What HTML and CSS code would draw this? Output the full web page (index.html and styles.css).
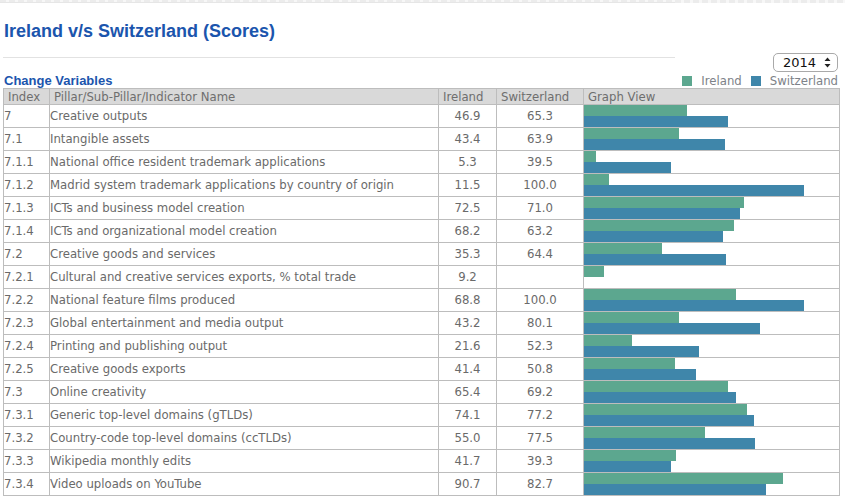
FILE: index.html
```html
<!DOCTYPE html>
<html>
<head>
<meta charset="utf-8">
<link rel="stylesheet" href="styles.css">
</head>
<body>
<div class="topline"><div class="topline-left"></div></div>
<h1 class="title">Ireland v/s Switzerland (Scores)</h1>
<div class="rule-row">
  <div class="rule"></div>
  <div class="select"><span>2014</span>
    <svg class="updown" width="7" height="11" viewBox="0 0 7 11"><path d="M3.5 0.5 L6.5 4 L0.5 4 Z M3.5 10.5 L6.5 7 L0.5 7 Z" fill="#222"/></svg>
  </div>
</div>
<div class="controls">
  <a class="change">Change Variables</a>
  <div class="legend">
    <span class="sw green"></span><span class="lg-label">Ireland</span>
    <span class="sw blue"></span><span class="lg-label">Switzerland</span>
  </div>
</div>
<table class="grid">
  <colgroup>
    <col class="c-idx"><col class="c-name"><col class="c-ie"><col class="c-ch"><col class="c-graph">
  </colgroup>
  <thead>
    <tr><th>Index</th><th>Pillar/Sub-Pillar/Indicator Name</th><th>Ireland</th><th>Switzerland</th><th>Graph View</th></tr>
  </thead>
  <tbody>
    <tr><td class="idx">7</td><td class="name">Creative outputs</td><td class="num">46.9</td><td class="num">65.3</td><td class="graph"><div class="bar green" style="width:103px"></div><div class="bar blue" style="width:144px"></div></td></tr>
    <tr><td class="idx">7.1</td><td class="name">Intangible assets</td><td class="num">43.4</td><td class="num">63.9</td><td class="graph"><div class="bar green" style="width:95px"></div><div class="bar blue" style="width:141px"></div></td></tr>
    <tr><td class="idx">7.1.1</td><td class="name">National office resident trademark applications</td><td class="num">5.3</td><td class="num">39.5</td><td class="graph"><div class="bar green" style="width:12px"></div><div class="bar blue" style="width:87px"></div></td></tr>
    <tr><td class="idx">7.1.2</td><td class="name">Madrid system trademark applications by country of origin</td><td class="num">11.5</td><td class="num">100.0</td><td class="graph"><div class="bar green" style="width:25px"></div><div class="bar blue" style="width:220px"></div></td></tr>
    <tr><td class="idx">7.1.3</td><td class="name">ICTs and business model creation</td><td class="num">72.5</td><td class="num">71.0</td><td class="graph"><div class="bar green" style="width:160px"></div><div class="bar blue" style="width:156px"></div></td></tr>
    <tr><td class="idx">7.1.4</td><td class="name">ICTs and organizational model creation</td><td class="num">68.2</td><td class="num">63.2</td><td class="graph"><div class="bar green" style="width:150px"></div><div class="bar blue" style="width:139px"></div></td></tr>
    <tr><td class="idx">7.2</td><td class="name">Creative goods and services</td><td class="num">35.3</td><td class="num">64.4</td><td class="graph"><div class="bar green" style="width:78px"></div><div class="bar blue" style="width:142px"></div></td></tr>
    <tr><td class="idx">7.2.1</td><td class="name">Cultural and creative services exports, % total trade</td><td class="num">9.2</td><td class="num"></td><td class="graph"><div class="bar green" style="width:20px"></div></td></tr>
    <tr><td class="idx">7.2.2</td><td class="name">National feature films produced</td><td class="num">68.8</td><td class="num">100.0</td><td class="graph"><div class="bar green" style="width:152px"></div><div class="bar blue" style="width:220px"></div></td></tr>
    <tr><td class="idx">7.2.3</td><td class="name">Global entertainment and media output</td><td class="num">43.2</td><td class="num">80.1</td><td class="graph"><div class="bar green" style="width:95px"></div><div class="bar blue" style="width:176px"></div></td></tr>
    <tr><td class="idx">7.2.4</td><td class="name">Printing and publishing output</td><td class="num">21.6</td><td class="num">52.3</td><td class="graph"><div class="bar green" style="width:48px"></div><div class="bar blue" style="width:115px"></div></td></tr>
    <tr><td class="idx">7.2.5</td><td class="name">Creative goods exports</td><td class="num">41.4</td><td class="num">50.8</td><td class="graph"><div class="bar green" style="width:91px"></div><div class="bar blue" style="width:112px"></div></td></tr>
    <tr><td class="idx">7.3</td><td class="name">Online creativity</td><td class="num">65.4</td><td class="num">69.2</td><td class="graph"><div class="bar green" style="width:144px"></div><div class="bar blue" style="width:152px"></div></td></tr>
    <tr><td class="idx">7.3.1</td><td class="name">Generic top-level domains (gTLDs)</td><td class="num">74.1</td><td class="num">77.2</td><td class="graph"><div class="bar green" style="width:163px"></div><div class="bar blue" style="width:170px"></div></td></tr>
    <tr><td class="idx">7.3.2</td><td class="name">Country-code top-level domains (ccTLDs)</td><td class="num">55.0</td><td class="num">77.5</td><td class="graph"><div class="bar green" style="width:121px"></div><div class="bar blue" style="width:171px"></div></td></tr>
    <tr><td class="idx">7.3.3</td><td class="name">Wikipedia monthly edits</td><td class="num">41.7</td><td class="num">39.3</td><td class="graph"><div class="bar green" style="width:92px"></div><div class="bar blue" style="width:87px"></div></td></tr>
    <tr><td class="idx">7.3.4</td><td class="name">Video uploads on YouTube</td><td class="num">90.7</td><td class="num">82.7</td><td class="graph"><div class="bar green" style="width:199px"></div><div class="bar blue" style="width:182px"></div></td></tr>
  </tbody>
</table>
</body>
</html>
```

FILE: styles.css
```css
html, body {
  margin: 0;
  padding: 0;
  background: #fff;
}
body {
  width: 845px;
  font-family: "DejaVu Sans Condensed", "DejaVu Sans", sans-serif;
  color: #666;
}
.topline {
  height: 3px;
  background: repeating-linear-gradient(90deg, #ececec 0 6px, #f7f7f7 6px 9px);
}
.topline-left {
  width: 675px;
  height: 3px;
  border-bottom: 1px solid #e6e6e6;
  box-sizing: border-box;
}
.title {
  margin: 0;
  padding: 17px 0 0 4px;
  height: 32px;
  box-sizing: content-box;
  font-family: "Liberation Sans", Arial, sans-serif;
  font-weight: bold;
  font-size: 18px;
  line-height: 22px;
  color: #1b55ad;
}
.rule-row {
  display: flex;
  justify-content: space-between;
  align-items: flex-start;
  height: 19px;
  padding: 0 7px 0 3px;
  margin-top: 1px;
}
.rule {
  width: 672px;
  height: 1px;
  margin-top: 4px;
  background: #e2e2e2;
}
.select {
  width: 65px;
  height: 19px;
  box-sizing: border-box;
  border: 1px solid #a9a9a9;
  border-radius: 5px;
  display: flex;
  align-items: center;
  justify-content: space-between;
  padding: 0 6px 0 9px;
  font-family: "DejaVu Sans", sans-serif;
  font-size: 13px;
  color: #111;
  background: #fff;
}
.controls {
  display: flex;
  justify-content: space-between;
  align-items: flex-end;
  height: 16px;
  padding: 0 7px 0 4px;
}
.change {
  font-family: "Liberation Sans", Arial, sans-serif;
  font-weight: bold;
  font-size: 13px;
  line-height: 15px;
  color: #1b55ad;
}
.legend {
  display: flex;
  align-items: center;
  font-size: 13px;
  line-height: 15px;
  color: #7d8288;
}
.sw {
  width: 10px;
  height: 10px;
  display: inline-block;
}
.lg-label {
  margin: 0 9px 0 9px;
}
.lg-label:last-child {
  margin-right: 0;
}
.green { background: #5ca78f; }
.blue { background: #3f86aa; }
.grid {
  margin-left: 3px;
  width: 836px;
  border-collapse: collapse;
  table-layout: fixed;
  font-size: 13px;
}
.c-idx { width: 46px; }
.c-name { width: 389px; }
.c-ie { width: 58px; }
.c-ch { width: 87px; }
.c-graph { width: 256px; }
.grid th, .grid td {
  border: 1px solid #bdbdbd;
  padding: 0;
  white-space: nowrap;
  overflow: hidden;
}
.grid th {
  background: #d9d9d9;
  font-weight: normal;
  text-align: left;
  padding-left: 4px;
  height: 15px;
  line-height: 15px;
  color: #6e6e6e;
}
.grid td {
  height: 22px;
  line-height: 22px;
  color: #6a6a6a;
}
.grid td.idx { padding-left: 0; }
.grid td.num { text-align: center; }
.grid td.graph {
  vertical-align: top;
  line-height: 0;
}
.bar {
  height: 11px;
}
```
